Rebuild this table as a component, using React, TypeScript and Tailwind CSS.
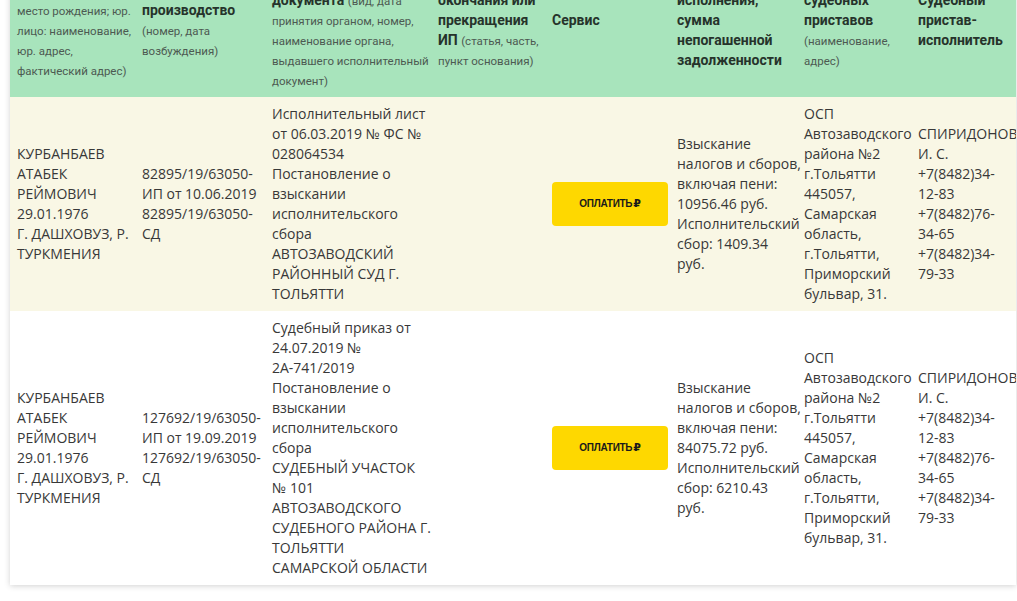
import React from 'react';

type Row = {
  debtor: string[];
  proceeding: string[];
  document: string[];
  subject: string[];
  department: string[];
  officer: string[];
  bg: string;
};

const rows: Row[] = [
  {
    debtor: ['КУРБАНБАЕВ', 'АТАБЕК', 'РЕЙМОВИЧ', '29.01.1976', 'Г. ДАШХОВУЗ, Р.', 'ТУРКМЕНИЯ'],
    proceeding: ['82895/19/63050-', 'ИП от 10.06.2019', '82895/19/63050-', 'СД'],
    document: [
      'Исполнительный лист',
      'от 06.03.2019 № ФС №',
      '028064534',
      'Постановление о',
      'взыскании',
      'исполнительского',
      'сбора',
      'АВТОЗАВОДСКИЙ',
      'РАЙОННЫЙ СУД Г.',
      'ТОЛЬЯТТИ',
    ],
    subject: ['Взыскание', 'налогов и сборов,', 'включая пени:', '10956.46 руб.', 'Исполнительский', 'сбор: 1409.34', 'руб.'],
    department: ['ОСП', 'Автозаводского', 'района №2', 'г.Тольятти', '445057,', 'Самарская', 'область,', 'г.Тольятти,', 'Приморский', 'бульвар, 31.'],
    officer: ['СПИРИДОНОВ', 'И. С.', '+7(8482)34-', '12-83', '+7(8482)76-', '34-65', '+7(8482)34-', '79-33'],
    bg: 'bg-[#f9f7e5]',
  },
  {
    debtor: ['КУРБАНБАЕВ', 'АТАБЕК', 'РЕЙМОВИЧ', '29.01.1976', 'Г. ДАШХОВУЗ, Р.', 'ТУРКМЕНИЯ'],
    proceeding: ['127692/19/63050-', 'ИП от 19.09.2019', '127692/19/63050-', 'СД'],
    document: [
      'Судебный приказ от',
      '24.07.2019 №',
      '2А-741/2019',
      'Постановление о',
      'взыскании',
      'исполнительского',
      'сбора',
      'СУДЕБНЫЙ УЧАСТОК',
      '№ 101',
      'АВТОЗАВОДСКОГО',
      'СУДЕБНОГО РАЙОНА Г.',
      'ТОЛЬЯТТИ',
      'САМАРСКОЙ ОБЛАСТИ',
    ],
    subject: ['Взыскание', 'налогов и сборов,', 'включая пени:', '84075.72 руб.', 'Исполнительский', 'сбор: 6210.43', 'руб.'],
    department: ['ОСП', 'Автозаводского', 'района №2', 'г.Тольятти', '445057,', 'Самарская', 'область,', 'г.Тольятти,', 'Приморский', 'бульвар, 31.'],
    officer: ['СПИРИДОНОВ', 'И. С.', '+7(8482)34-', '12-83', '+7(8482)76-', '34-65', '+7(8482)34-', '79-33'],
    bg: 'bg-white',
  },
];

const Lines = ({ lines }: { lines: string[] }) => (
  <>
    {lines.map((l, i) => (
      <div key={i} className="whitespace-nowrap">{l}</div>
    ))}
  </>
);

const B = ({ children }: { children: React.ReactNode }) => (
  <span className="font-bold text-[14px] leading-[20px] text-[#26332b]">{children}</span>
);

const S = ({ children }: { children: React.ReactNode }) => (
  <span className="text-[11.5px] leading-[20px] text-[#4d5a52]">{children}</span>
);

// one header line, fixed to 20px so mixed sizes don't stretch it
const L = ({ children }: { children: React.ReactNode }) => (
  <div className="whitespace-nowrap h-[20px] leading-[20px]">{children}</div>
);

export default function App() {
  return (
    <div className="w-[1017px] h-[601px] overflow-hidden bg-white font-['Open_Sans','Noto_Sans',sans-serif]">
      <div className="-mt-[58px] ml-[10px] w-[1006px] shadow-[0_1px_6px_rgba(0,0,0,0.18)]">
        <table className="table-fixed w-full border-collapse text-[14px] leading-[20px] text-[#383838]">
          <colgroup>
            <col className="w-[125px]" />
            <col className="w-[130px]" />
            <col className="w-[166px]" />
            <col className="w-[114px]" />
            <col className="w-[125px]" />
            <col className="w-[127px]" />
            <col className="w-[114px]" />
            <col className="w-[105px]" />
          </colgroup>
          <thead className="font-['Roboto','Noto_Sans',sans-serif]">
            <tr className="bg-[#a8e4bc] align-middle text-left">
              <th className="px-[7px] py-[7px] font-normal h-[155px]">
                <L><B>Должник</B> <S>(физ.</S></L>
                <L><S>лицо: ФИО, дата и</S></L>
                <L><S>место рождения; юр.</S></L>
                <L><S>лицо: наименование,</S></L>
                <L><S>юр. адрес,</S></L>
                <L><S>фактический адрес)</S></L>
              </th>
              <th className="px-[7px] py-[7px] font-normal">
                <L><B>Исполнительное</B></L>
                <L><B>производство</B></L>
                <L><S>(номер, дата</S></L>
                <L><S>возбуждения)</S></L>
              </th>
              <th className="px-[7px] py-[7px] font-normal">
                <L><B>Реквизиты</B></L>
                <L><B>исполнительного</B></L>
                <L><B>документа</B> <S>(вид, дата</S></L>
                <L><S>принятия органом, номер,</S></L>
                <L><S>наименование органа,</S></L>
                <L><S>выдавшего исполнительный</S></L>
                <L><S>документ)</S></L>
              </th>
              <th className="px-[7px] py-[7px] font-normal">
                <L><B>Дата, причина</B></L>
                <L><B>окончания или</B></L>
                <L><B>прекращения</B></L>
                <L><B>ИП</B> <S>(статья, часть,</S></L>
                <L><S>пункт основания)</S></L>
              </th>
              <th className="px-[7px] py-[7px] font-normal">
                <L><B>Сервис</B></L>
              </th>
              <th className="px-[7px] py-[7px] font-normal">
                <L><B>Предмет</B></L>
                <L><B>исполнения,</B></L>
                <L><B>сумма</B></L>
                <L><B>непогашенной</B></L>
                <L><B>задолженности</B></L>
              </th>
              <th className="px-[7px] py-[7px] font-normal">
                <L><B>Отдел</B></L>
                <L><B>судебных</B></L>
                <L><B>приставов</B></L>
                <L><S>(наименование,</S></L>
                <L><S>адрес)</S></L>
              </th>
              <th className="px-[7px] py-[7px] font-normal">
                <L><B>Судебный</B></L>
                <L><B>пристав-</B></L>
                <L><B>исполнитель</B></L>
              </th>
            </tr>
          </thead>
          <tbody>
            {rows.map((r, i) => (
              <tr key={i} className={`${r.bg} align-middle`}>
                <td className="px-[7px] py-[7px]"><Lines lines={r.debtor} /></td>
                <td className="px-[7px] py-[7px]"><Lines lines={r.proceeding} /></td>
                <td className="px-[7px] py-[7px]"><Lines lines={r.document} /></td>
                <td className="px-[7px] py-[7px]"></td>
                <td className="px-[7px] py-[7px]">
                  <button className="w-[116px] h-[44px] rounded-[4px] bg-[#fed800] text-[#1a1a1a] font-['Liberation_Sans','DejaVu_Sans',sans-serif] font-bold text-[10px] tracking-[-0.3px] flex items-center justify-center">
                    ОПЛАТИТЬ<span className="font-['DejaVu_Sans',sans-serif] text-[11px] ml-[1px]">₽</span>
                  </button>
                </td>
                <td className="px-[7px] py-[7px]"><Lines lines={r.subject} /></td>
                <td className="px-[7px] py-[7px]"><Lines lines={r.department} /></td>
                <td className="px-[7px] py-[7px] overflow-hidden"><Lines lines={r.officer} /></td>
              </tr>
            ))}
          </tbody>
        </table>
      </div>
    </div>
  );
}
